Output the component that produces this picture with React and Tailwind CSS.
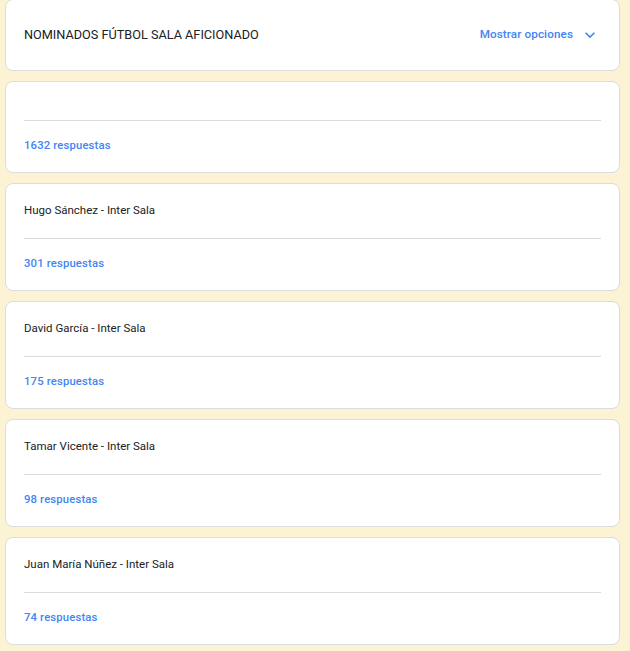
import React from 'react';

const items = [
  { name: '', count: 1632 },
  { name: 'Hugo Sánchez - Inter Sala', count: 301 },
  { name: 'David García - Inter Sala', count: 175 },
  { name: 'Tamar Vicente - Inter Sala', count: 98 },
  { name: 'Juan María Núñez - Inter Sala', count: 74 },
];

const App = () => {
  return (
    <div className="min-h-screen w-full bg-[#fbf3d3] pl-[5px] pr-[10px] pb-3" style={{ fontFamily: 'Roboto, "Liberation Sans", sans-serif' }}>
      <div className="flex flex-col gap-[10px]">
        {/* Header */}
        <div className="bg-white border border-[#dadce0] rounded-lg h-[72px] -mt-px flex items-center justify-between pl-[18px] pr-[19px]">
          <h1 className="text-[12.7px] font-normal text-[#202124]">NOMINADOS FÚTBOL SALA AFICIONADO</h1>
          <button className="flex items-center gap-[7px] text-[11.7px] font-medium text-[#4285f4] tracking-[0.1px]">
            <span>Mostrar opciones</span>
            <svg width="20" height="20" viewBox="0 0 24 24" fill="#4285f4">
              <path d="M16.59 8.59 12 13.17 7.41 8.59 6 10l6 6 6-6z" />
            </svg>
          </button>
        </div>

        {items.map((item) => (
          <div key={item.count} className="bg-white border border-[#dadce0] rounded-lg px-[18px]">
            <div className={item.name ? 'h-[54px] flex items-center' : 'h-[38px]'}>
              <span className="text-[11.5px] text-[#202124]">{item.name}</span>
            </div>
            <div className="border-t border-[#dadce0]" />
            <div className="h-[51px] flex items-center">
              <span className="text-[11.3px] font-medium text-[#4285f4] tracking-[0.15px]">{item.count} respuestas</span>
            </div>
          </div>
        ))}
      </div>
    </div>
  );
};

export default App;
